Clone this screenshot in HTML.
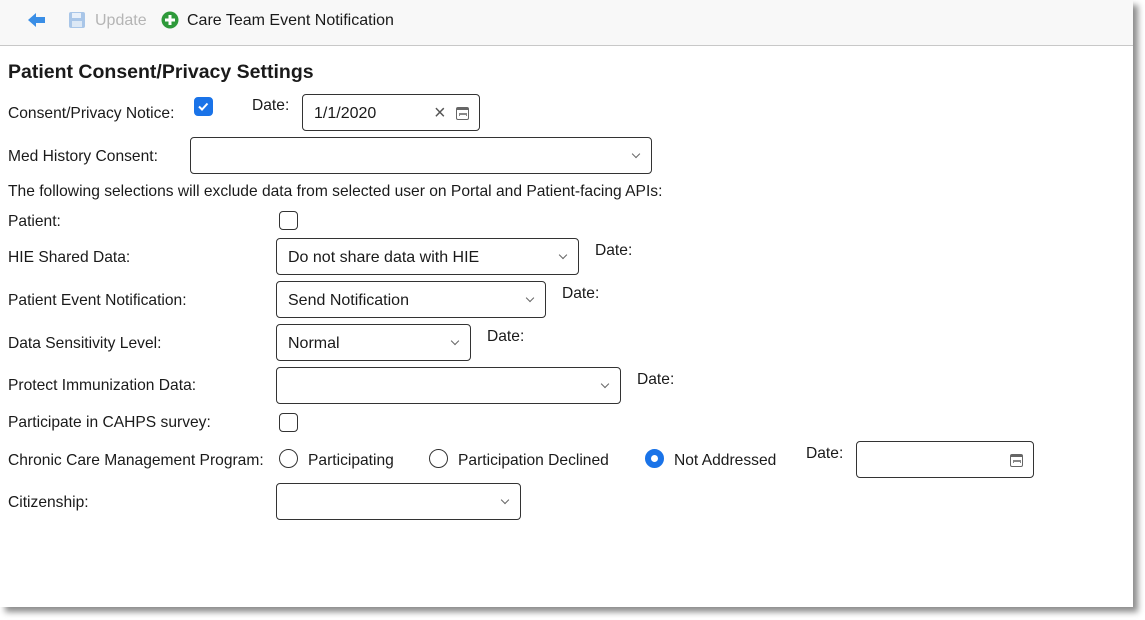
<!DOCTYPE html>
<html><head><meta charset="utf-8"><style>
*{box-sizing:border-box;margin:0;padding:0}
body{width:1145px;height:620px;background:#fff;position:relative;overflow:hidden;font-family:"Liberation Sans",sans-serif;font-size:15.6px;color:#1a1a1a}
.page{position:absolute;left:0;top:0;width:1133px;height:607px;background:#fff;box-shadow:5px 5px 6px rgba(0,0,0,.45)}
.tb{position:absolute;left:0;top:0;width:1133px;height:46px;background:#f8f8f8;border-bottom:1px solid #c8c8c8}
.a{position:absolute;line-height:20px;white-space:nowrap;margin-top:1px}
.sel{position:absolute;border:1px solid #333;border-radius:4px;background:#fff;padding-left:11px;line-height:37px;font-size:16px}
.sel:after{content:"";position:absolute;right:12px;top:13px;width:5px;height:5px;border-right:1.3px solid #666;border-bottom:1.3px solid #666;transform:rotate(45deg)}
.sel.nd:after{display:none}
.cb{position:absolute;width:19px;height:19px;border:1.3px solid #333;border-radius:4px;background:#fff}
.rd{position:absolute;width:19px;height:19px;border:1.3px solid #333;border-radius:50%}
.cal{position:absolute;width:13px;height:13px;border:1.5px solid #666;border-top-width:3px;border-radius:2px}
.cal:after{content:"";position:absolute;left:2px;top:3px;width:6px;height:1.5px;border-left:1.5px dotted #888;border-right:1.5px dotted #888;background:#888}
</style></head><body>
<div class="page">
<div class="tb">
<svg style="position:absolute;left:27px;top:12px" width="20" height="16" viewBox="0 0 20 16"><path d="M1 8 L9 1 V5 H18 V11 H9 V15 Z" fill="#3a8ee6"/></svg>
<svg style="position:absolute;left:68px;top:11px" width="18" height="18" viewBox="0 0 18 18"><rect x="1" y="1" width="16" height="16" rx="2" fill="#a9c6e8"/><rect x="4" y="2" width="9" height="5" fill="#e8f0fa"/><rect x="4" y="10" width="10" height="6" fill="#dce8f5"/></svg>
<div class="a" style="left:95px;top:10px;color:#b5b5b5;font-size:16px">Update</div>
<svg style="position:absolute;left:161px;top:11px" width="18" height="18" viewBox="0 0 18 18"><circle cx="9" cy="9" r="8.5" fill="#2e9a3a"/><path d="M9 4V14M4 9H14" stroke="#fff" stroke-width="3"/></svg>
<div class="a" style="left:187px;top:10px;font-size:16px">Care Team Event Notification</div>
</div>
<div class="a" style="left:8px;top:60px;font-size:19.5px;font-weight:bold;line-height:22px">Patient Consent/Privacy Settings</div>
<div class="a" style="left:8px;top:103px">Consent/Privacy Notice:</div>
<div class="cb" style="left:194px;top:97px;background:#1a73e8;border-color:#1a73e8"><svg width="17" height="17" viewBox="0 0 17 17" style="position:absolute;left:0;top:0"><path d="M4 8.5L7 11.5L12.5 5.5" stroke="#fff" stroke-width="2" fill="none"/></svg></div>
<div class="a" style="left:252px;top:95px">Date:</div>
<div class="sel nd" style="left:302px;top:94px;width:178px;height:37px">1/1/2020<span style="position:absolute;left:131px;top:0;color:#555;font-size:20px">×</span><div class="cal" style="left:153px;top:12px"></div></div>
<div class="a" style="left:8px;top:146px">Med History Consent:</div>
<div class="sel" style="left:190px;top:137px;width:462px;height:37px"></div>
<div class="a" style="left:8px;top:181px">The following selections will exclude data from selected user on Portal and Patient-facing APIs:</div>
<div class="a" style="left:8px;top:211px">Patient:</div>
<div class="cb" style="left:279px;top:211px"></div>
<div class="a" style="left:8px;top:247px">HIE Shared Data:</div>
<div class="sel" style="left:276px;top:238px;width:303px;height:37px">Do not share data with HIE</div>
<div class="a" style="left:595px;top:240px">Date:</div>
<div class="a" style="left:8px;top:290px">Patient Event Notification:</div>
<div class="sel" style="left:276px;top:281px;width:270px;height:37px">Send Notification</div>
<div class="a" style="left:562px;top:283px">Date:</div>
<div class="a" style="left:8px;top:333px">Data Sensitivity Level:</div>
<div class="sel" style="left:276px;top:324px;width:195px;height:37px">Normal</div>
<div class="a" style="left:487px;top:326px">Date:</div>
<div class="a" style="left:8px;top:375px">Protect Immunization Data:</div>
<div class="sel" style="left:276px;top:367px;width:345px;height:37px"></div>
<div class="a" style="left:637px;top:369px">Date:</div>
<div class="a" style="left:8px;top:412px">Participate in CAHPS survey:</div>
<div class="cb" style="left:279px;top:413px"></div>
<div class="a" style="left:8px;top:450px">Chronic Care Management Program:</div>
<div class="rd" style="left:279px;top:449px"></div>
<div class="a" style="left:308px;top:450px">Participating</div>
<div class="rd" style="left:429px;top:449px"></div>
<div class="a" style="left:458px;top:450px">Participation Declined</div>
<div class="rd" style="left:645px;top:449px;border:6px solid #1a73e8;background:#fff"></div>
<div class="a" style="left:674px;top:450px">Not Addressed</div>
<div class="a" style="left:806px;top:443px">Date:</div>
<div class="sel nd" style="left:856px;top:441px;width:178px;height:37px"><div class="cal" style="left:153px;top:12px"></div></div>
<div class="a" style="left:8px;top:492px">Citizenship:</div>
<div class="sel" style="left:276px;top:483px;width:245px;height:37px"></div>
</div>
</body></html>
